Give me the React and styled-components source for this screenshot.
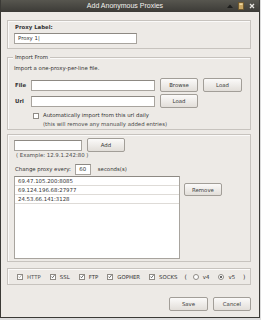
import React from 'react';
import styled, { createGlobalStyle } from 'styled-components';

const Global = createGlobalStyle`
html, body {
    margin: 0;
    padding: 0;
    background: #dcdcdc;
}
* {
    box-sizing: border-box;
}
`

const Window = styled.div`
width: 260px;
height: 318px;
background: #edeae6;
border: 1px solid #3b3a36;
border-top: none;
display: flex;
flex-direction: column;
font-family: "DejaVu Sans", Verdana, sans-serif;
font-size: 5.4px;
color: #333;
`

const TitleBar = styled.div`
height: 12px;
flex: none;
display: grid;
grid-template-columns: 1fr auto 1fr;
align-items: center;
background: linear-gradient(#57564f, #3c3b37);
padding: 0 4px;
`

const Title = styled.div`
grid-column: 2;
color: #f2f1ee;
font-family: "Liberation Sans", Arial, sans-serif;
font-size: 7px;
line-height: 12px;
margin-right: 10px;
`

const Controls = styled.div`
grid-column: 3;
justify-self: end;
display: flex;
align-items: center;
gap: 5px;
`

const Body = styled.div`
flex: 1;
display: flex;
flex-direction: column;
padding: 8px 8px 0 6px;
`

const Frame = styled.div`
position: relative;
border: 1px solid #c7c3be;
box-shadow: inset 1px 1px 0 #fbfaf9;
margin-top: ${p => p.$top || 0}px;
padding: ${p => p.$pad || '0 6px'};
display: flex;
flex-direction: column;
`

const Legend = styled.span`
position: absolute;
top: -4px;
left: 5px;
padding: 0 2px;
background: #edeae6;
line-height: 7px;
`

const Text = styled.div`
line-height: ${p => p.$lh || 7}px;
margin-top: ${p => p.$mt || 0}px;
margin-left: ${p => p.$ml || 0}px;
font-weight: ${p => (p.$bold ? 'bold' : 'normal')};
color: ${p => p.$muted ? '#4a4a4a' : '#333'};
white-space: nowrap;
`

const Input = styled.div`
width: ${p => p.$w}px;
height: 11px;
background: #fff;
border: 1px solid #a8a49e;
border-top-color: #8d8983;
padding: 0 3px;
line-height: 9px;
white-space: nowrap;
flex: none;
`

const Button = styled.div`
width: ${p => p.$w || 38}px;
height: ${p => p.$h || 14}px;
flex: none;
display: flex;
align-items: center;
justify-content: center;
border: 1px solid #a29e98;
border-radius: 2px;
background: linear-gradient(#fbfaf9, #e2ded9);
color: #3a3a3a;
`

const Row = styled.div`
display: flex;
align-items: ${p => p.$align || 'center'};
gap: ${p => p.$gap ?? 5}px;
margin-top: ${p => p.$mt || 0}px;
margin-left: ${p => p.$ml || 0}px;
height: ${p => (p.$h ? p.$h + 'px' : 'auto')};
`

const FieldLabel = styled.div`
width: 17px;
margin-right: -5px;
padding-left: 1px;
font-weight: bold;
`

const List = styled.div`
width: 166px;
height: 83px;
flex: none;
background: #fff;
border: 1px solid #a8a49e;
border-top-color: #8d8983;
`

const ListRow = styled.div`
height: 9px;
line-height: 8px;
padding-left: 3px;
border-bottom: 1px solid #dedbd7;
`

const Box = styled.span`
width: 6px;
height: 6px;
flex: none;
background: #fff;
border: 1px solid #8f8b85;
border-radius: ${p => (p.$round ? '50%' : '0')};
display: flex;
align-items: center;
justify-content: center;
`

const Dot = styled.span`
width: 2px;
height: 2px;
border-radius: 50%;
background: #333;
`

const Option = styled.div`
display: flex;
align-items: center;
gap: 4px;
color: ${p => p.$dim ? '#555' : '#333'};
`

const Paren = styled.span`
font-size: 6px;
margin: ${p => p.$m};
`

const Footer = styled.div`
display: flex;
justify-content: flex-end;
gap: 5px;
margin-top: 12px;
`

const Check = ({ checked, disabled }) => (
    <Box>
        {checked && (
            <svg width="5" height="5" viewBox="0 0 5 5">
                <path d="M0.6 2.6 L1.9 4 L4.4 0.8" fill="none" stroke={disabled ? '#9a9893' : '#333'} strokeWidth="0.9" />
            </svg>
        )}
    </Box>
)

const Radio = ({ checked }) => (
    <Box $round>{checked && <Dot />}</Box>
)

const proxies = ['69.47.105.200:8085', '69.124.196.68:27977', '24.53.66.141:3128']

const App = () => {
    return (
        <>
            <Global />
            <Window>
                <TitleBar>
                    <Title>Add Anonymous Proxies</Title>
                    <Controls>
                        <svg width="6" height="4" viewBox="0 0 6 4">
                            <path d="M0 4 L3 0.5 L6 4 Z" fill="#1e1e1c" />
                        </svg>
                        <svg width="6" height="8" viewBox="0 0 6 8">
                            <rect x="0.5" y="0.5" width="5" height="7" fill="#c8a663" stroke="#6b5428" strokeWidth="0.8" />
                            <rect x="1.5" y="1.5" width="3" height="1.4" fill="#f0dca8" />
                        </svg>
                        <svg width="6" height="6" viewBox="0 0 6 6">
                            <path d="M1 1 L5 5 M5 1 L1 5" stroke="#e8e6e2" strokeWidth="1.3" />
                        </svg>
                    </Controls>
                </TitleBar>
                <Body>
                    <Frame $pad="3px 6px 4px 6px">
                        <Text $bold $ml={1}>Proxy Label:</Text>
                        <Input $w={123} style={{ marginTop: 2 }}>Proxy 1|</Input>
                    </Frame>

                    <Frame $top={8} $pad="7px 6px 1px 6px">
                        <Legend>Import From</Legend>
                        <Text>Import a one-proxy-per-line file.</Text>
                        <Row $mt={6} $h={14}>
                            <FieldLabel>File</FieldLabel>
                            <Input $w={124} />
                            <Button>Browse</Button>
                            <Button $w={39}>Load</Button>
                        </Row>
                        <Row $mt={2} $h={14}>
                            <FieldLabel>Url</FieldLabel>
                            <Input $w={124} />
                            <Button>Load</Button>
                        </Row>
                        <Row $mt={4} $ml={19} $gap={4} $h={7}>
                            <Box />
                            <Text>Automatically import from this url daily</Text>
                        </Row>
                        <Text $mt={2} $ml={29} $muted>(this will remove any manually added entries)</Text>
                    </Frame>

                    <Frame $top={4} $pad="3px 6px 2px 6px">
                        <Row $h={14}>
                            <Input $w={68} />
                            <Button>Add</Button>
                        </Row>
                        <Text $ml={2} $muted>( Example: 12.9.1.242:80 )</Text>
                        <Row $mt={5} $gap={4} $h={11}>
                            <Text $ml={1}>Change proxy every:</Text>
                            <Input $w={16} style={{ textAlign: 'center' }}>60</Input>
                            <Text $ml={3}>seconds(s)</Text>
                        </Row>
                        <Row $mt={1} $gap={4} $align="flex-start">
                            <List>
                                {proxies.map(p => <ListRow key={p}>{p}</ListRow>)}
                            </List>
                            <Button $h={13} style={{ marginTop: 7 }}>Remove</Button>
                        </Row>
                    </Frame>

                    <Frame $top={6} $pad="0 6px 0 9px">
                        <Row $h={15} $gap={9}>
                            <Option $dim><Check checked disabled />HTTP</Option>
                            <Option><Check checked />SSL</Option>
                            <Option><Check checked />FTP</Option>
                            <Option><Check checked />GOPHER</Option>
                            <Option><Check checked />SOCKS</Option>
                            <Paren $m="0 -3px 0 -2px">(</Paren>
                            <Option><Radio />v4</Option>
                            <Option><Radio checked />v5</Option>
                            <Paren $m="0 0 0 -1px">)</Paren>
                        </Row>
                    </Frame>

                    <Footer>
                        <Button $w={39}>Save</Button>
                        <Button>Cancel</Button>
                    </Footer>
                </Body>
            </Window>
        </>
    );
};

export default App;
